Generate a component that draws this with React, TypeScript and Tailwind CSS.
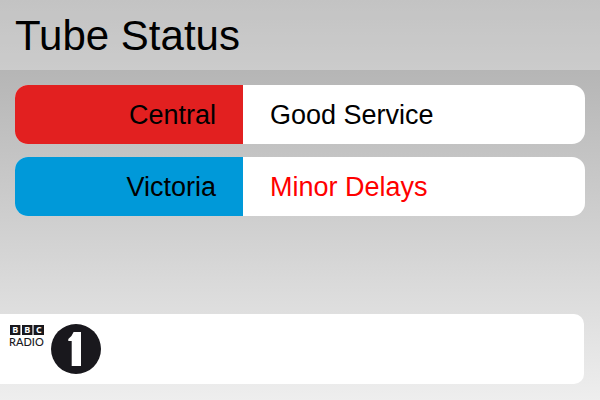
type Line = { name: string; status: string; color: string; delayed: boolean };

const lines: Line[] = [
  { name: "Central", status: "Good Service", color: "bg-[#e22020]", delayed: false },
  { name: "Victoria", status: "Minor Delays", color: "bg-[#0099d9]", delayed: true },
];

function LineRow({ line }: { line: Line }) {
  return (
    <li className="flex overflow-hidden rounded-[13px] bg-white text-[27px] leading-[57px]">
      <span className={`w-2/5 pt-[2px] pr-[27px] text-right ${line.color}`}>{line.name}</span>
      <span className={`pt-[2px] pl-[27px] ${line.delayed ? "text-[#ff0000]" : "text-black"}`}>
        {line.status}
      </span>
    </li>
  );
}

function StationLogo() {
  return (
    <svg className="h-[70px] w-[110px]" viewBox="0 0 110 70" role="img" aria-label="BBC Radio 1">
      <g fill="#19181d">
        <rect x="10" y="11" width="10.4" height="10" />
        <rect x="22" y="11" width="10.4" height="10" />
        <rect x="33.6" y="11" width="10.4" height="10" />
      </g>
      <g
        fill="#ffffff"
        fontFamily="'Open Sans', 'Liberation Sans', sans-serif"
        fontSize="9"
        fontWeight="700"
        textAnchor="middle"
      >
        <text x="15.2" y="19">B</text>
        <text x="27.2" y="19">B</text>
        <text x="38.8" y="19">C</text>
      </g>
      <text
        x="9"
        y="32"
        fill="#19181d"
        fontFamily="Lato, 'Liberation Sans', sans-serif"
        fontSize="11"
        fontWeight="500"
      >
        RADIO
      </text>
      <circle cx="76" cy="35" r="25" fill="#19181d" />
      <path d="M73.6 18H81V52H71.7V27H68.3V25Q72 22.4 73.6 18Z" fill="#ffffff" />
    </svg>
  );
}

export default function App() {
  return (
    <main className="flex min-h-screen flex-col bg-linear-to-b from-[#aaaaaa] to-[#eeeeee] font-['Liberation_Sans',Arial,sans-serif] text-black">
      <header className="bg-white/30 px-[15px] pt-[2px]">
        <h1 className="text-[42px] leading-[68px]">Tube Status</h1>
      </header>
      <ul className="flex flex-col gap-[13px] p-[15px]">
        {lines.map((line) => (
          <LineRow key={line.name} line={line} />
        ))}
      </ul>
      <footer className="mt-auto mr-4 mb-4 rounded-r-[10px] bg-white">
        <StationLogo />
      </footer>
    </main>
  );
}
